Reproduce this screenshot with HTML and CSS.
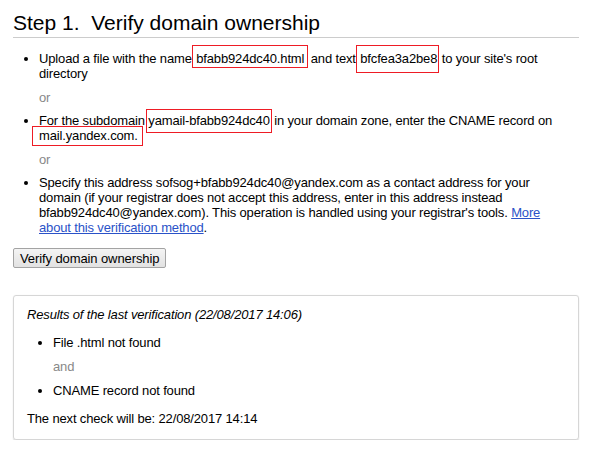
FILE: index.html
```html
<!DOCTYPE html>
<html>
<head>
<meta charset="utf-8">
<link rel="stylesheet" href="styles.css">
</head>
<body>
<div class="page">
  <h1 class="title">Step 1.&nbsp; Verify domain ownership</h1>
  <ul class="methods">
    <li>Upload a file with the name <span class="mark m1">bfabb924dc40.html</span> and text <span class="mark m2">bfcfea3a2be8</span> to your site's root directory</li>
    <li class="or">or</li>
    <li>For the subdomain <span class="mark m3">yamail-bfabb924dc40</span> in your domain zone, enter the CNAME record on <span class="mark m4">mail.yandex.com.</span></li>
    <li class="or">or</li>
    <li>Specify this address sofsog+bfabb924dc40@yandex.com as a contact address for your domain (if your registrar does not accept this address, enter in this address instead bfabb924dc40@yandex.com). This operation is handled using your registrar's tools. <a href="#" class="link">More about this verification method</a>.</li>
  </ul>
  <button class="btn">Verify domain ownership</button>
  <div class="result">
    <div class="result-title">Results of the last verification (22/08/2017 14:06)</div>
    <ul class="result-list">
      <li>File .html not found</li>
      <li class="and">and</li>
      <li>CNAME record not found</li>
    </ul>
    <div class="next">The next check will be: 22/08/2017 14:14</div>
  </div>
</div>
</body>
</html>
```
FILE: styles.css
```css
html, body {
  margin: 0;
  padding: 0;
  background: #fff;
}
body {
  font-family: "Liberation Sans", Arial, sans-serif;
  font-size: 13px;
  line-height: 15px;
  letter-spacing: -0.15px;
  color: #000;
}
.page {
  width: 566px;
  padding: 11px 0 0 13px;
}
.title {
  margin: 0;
  font-size: 21px;
  line-height: 24px;
  font-weight: normal;
  letter-spacing: 0;
  padding-bottom: 2px;
  border-bottom: 1px solid #cccccc;
}
.methods {
  margin: 13px 0 0;
  padding: 0 16px 0 26px;
}
.methods li {
  line-height: 15px;
}
.methods .or {
  list-style: none;
  color: #888;
  margin: 9px 0 8px;
}
.mark {
  border: 1px solid #ee1c25;
}
.m1 {
  padding: 5px 3px 1px 3px;
  margin: 0 -1px 0 -3px;
}
.m2 {
  padding: 5px 1px 6px 3px;
  margin: 0 -1px 0 -3px;
}
.m3 {
  padding: 3px 1px 4px 1px;
  margin: 0 -1px 0 -2px;
}
.m4 {
  padding: 1px 4px 2px 6px;
  margin: 0 0 0 -7px;
}
.link {
  color: #2a52c8;
  text-decoration: underline;
}
.btn {
  display: block;
  margin: 13px 0 0;
  height: 20px;
  padding: 0 6px;
  font-family: "Liberation Sans", Arial, sans-serif;
  font-size: 13px;
  letter-spacing: -0.1px;
  color: #000;
  border: 1px solid #a3a3a3;
  border-radius: 2px;
  background: linear-gradient(#f4f4f4, #e2e2e2);
}
.result {
  margin-top: 27px;
  border: 1px solid #d6d6d6;
  border-radius: 3px;
  box-shadow: 0 2px 2px -1px rgba(0, 0, 0, 0.35), 0 0 1px rgba(0, 0, 0, 0.1);
  padding: 11px 13px 13px;
}
.result-title {
  font-style: italic;
}
.result-list {
  margin: 13px 0 13px;
  padding-left: 26px;
}
.result-list .and {
  list-style: none;
  color: #888;
  margin: 9px 0;
}
```
